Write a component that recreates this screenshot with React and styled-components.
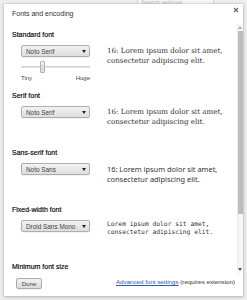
import React from "react";
import styled, { createGlobalStyle } from "styled-components";

const Global = createGlobalStyle`
  html, body { margin: 0; padding: 0; }
  body {
    width: 247px;
    height: 300px;
    overflow: hidden;
    background: #efefef;
    font-family: "Liberation Sans", Arial, sans-serif;
  }
`;

const Page = styled.div`
  position: relative;
  width: 247px;
  height: 300px;
  overflow: hidden;
  background: #efefef;
`;

const PageTop = styled.div`
  display: flex;
  padding-left: 137px;
`;

const SearchBox = styled.div`
  width: 77px;
  height: 11px;
  margin-top: -4px;
  box-sizing: border-box;
  border: 1px solid #d2d2d2;
  background: #f6f6f6;
  padding: 2px 3px 0;
  font-size: 6px;
  line-height: 7px;
  color: #c0c0c0;
`;

const Dialog = styled.div`
  position: absolute;
  top: 4px;
  left: 4px;
  right: 4px;
  bottom: 4px;
  background: #fff;
  display: flex;
  flex-direction: column;
  box-shadow: 0 0 0 1px rgba(0, 0, 0, 0.05), 0 1px 4px rgba(0, 0, 0, 0.22);
`;

const Header = styled.div`
  height: 20px;
  flex: none;
  box-sizing: border-box;
  display: flex;
  justify-content: space-between;
  align-items: flex-start;
  padding: 3px 4px 0 8px;
`;

const Title = styled.h1`
  margin: 3px 0 0;
  font-size: 7px;
  line-height: 8px;
  font-weight: normal;
  color: #333;
`;

const CloseButton = styled.button`
  width: 6px;
  height: 6px;
  padding: 0;
  border: 0;
  background: none;
  display: flex;
`;

const Body = styled.div`
  flex: 1;
  min-height: 0;
  display: flex;
`;

const Content = styled.div`
  flex: 1;
  min-width: 0;
  overflow: hidden;
  padding: 7px 0 0 8px;
`;

const Scrollbar = styled.div`
  width: 6px;
  flex: none;
  display: flex;
  flex-direction: column;
  background: #f7f7f7;
  box-shadow: inset 1px 0 0 #ececec;
`;

const ScrollArrow = styled.div`
  height: 7px;
  flex: none;
  display: flex;
  align-items: center;
  justify-content: center;
`;

const ScrollThumb = styled.div`
  height: 183px;
  flex: none;
  margin: 0 0 0 1px;
  background: #bdbdbd;
`;

const ScrollTrack = styled.div`
  flex: 1;
`;

const Section = styled.section`
  padding-bottom: ${(p) => p.$after}px;
`;

const Label = styled.h3`
  margin: 0 0 6px;
  font-size: 7px;
  line-height: 8px;
  font-weight: normal;
  color: #000;
  -webkit-text-stroke: 0.15px #000;
`;

const Row = styled.div`
  display: flex;
  align-items: flex-start;
  gap: 17px;
  padding-left: 9px;
  min-height: 21px;
`;

const Controls = styled.div`
  width: 69px;
  flex: none;
  display: flex;
  flex-direction: column;
`;

const Select = styled.div`
  height: 12px;
  box-sizing: border-box;
  border: 1px solid #aeaeae;
  border-radius: 2px;
  background: linear-gradient(#f2f2f2, #dedede);
  box-shadow: 0 1px 0 rgba(0, 0, 0, 0.05);
  display: flex;
  align-items: center;
  justify-content: space-between;
  padding: 0 3px 0 4px;
  font-size: 6.4px;
  color: #444;
`;

const Caret = styled.span`
  width: 0;
  height: 0;
  border-left: 2.5px solid transparent;
  border-right: 2.5px solid transparent;
  border-top: 3px solid #222;
`;

const Slider = styled.div`
  position: relative;
  height: 12px;
  margin-top: 4px;
  display: flex;
  align-items: center;
`;

const SliderTrack = styled.div`
  flex: 1;
  height: 2px;
  box-sizing: border-box;
  border-top: 1px solid #cfcfcf;
  background: #e6e6e6;
`;

const SliderThumb = styled.div`
  position: absolute;
  left: 19px;
  top: 0;
  width: 5px;
  height: 12px;
  box-sizing: border-box;
  border: 1px solid #b0b0b0;
  border-radius: 1px;
  background: linear-gradient(#f4f4f4, #e0e0e0);
  display: flex;
  flex-direction: column;
  justify-content: center;
  gap: 1px;
  padding: 0 1px;
`;

const Grip = styled.span`
  height: 1px;
  background: #b5b5b5;
`;

const SliderLabels = styled.div`
  display: flex;
  justify-content: space-between;
  margin-top: 1px;
  font-size: 6px;
  line-height: 8px;
  color: #444;
`;

const fonts = {
  serif: { family: '"DejaVu Serif", serif', size: 7.1, lh: 10, top: 1 },
  sans: { family: '"Noto Sans", sans-serif', size: 7.4, lh: 10, top: 1 },
  mono: { family: '"DejaVu Sans Mono", monospace', size: 6.3, lh: 8, top: 0 },
};

const Sample = styled.p`
  margin: ${(p) => fonts[p.$kind].top}px 0 0;
  font-family: ${(p) => fonts[p.$kind].family};
  font-size: ${(p) => fonts[p.$kind].size}px;
  line-height: ${(p) => fonts[p.$kind].lh}px;
  color: #333;
  white-space: nowrap;
`;

const Footer = styled.footer`
  height: 23px;
  flex: none;
  box-sizing: border-box;
  display: flex;
  align-items: flex-start;
  justify-content: space-between;
  padding: 5px 8px 0 12px;
`;

const Button = styled.button`
  width: 26px;
  height: 11px;
  padding: 0;
  box-sizing: border-box;
  border: 1px solid #acacac;
  border-radius: 2px;
  background: linear-gradient(#f2f2f2, #dcdcdc);
  box-shadow: 0 1px 0 rgba(0, 0, 0, 0.06);
  font-family: "Liberation Sans", Arial, sans-serif;
  font-size: 6.1px;
  color: #444;
`;

const Note = styled.div`
  font-size: 6.2px;
  line-height: 8px;
  color: #333;
`;

const Link = styled.a`
  color: #2a5db0;
  text-decoration: underline;
`;

const LOREM1 = "Lorem ipsum dolor sit amet,";
const LOREM2 = "consectetur adipiscing elit.";

function FontSelect({ name }) {
  return (
    <Select>
      <span>{name}</span>
      <Caret />
    </Select>
  );
}

function FontSection({ label, font, kind, prefix = "16: ", after = 22, children }) {
  return (
    <Section $after={after}>
      <Label>{label}</Label>
      <Row>
        <Controls>
          <FontSelect name={font} />
          {children}
        </Controls>
        <Sample $kind={kind}>
          {prefix}
          {LOREM1}
          <br />
          {LOREM2}
        </Sample>
      </Row>
    </Section>
  );
}

export default function App() {
  return (
    <>
      <Global />
      <Page>
        <PageTop>
          <SearchBox>Search settings</SearchBox>
        </PageTop>
        <Dialog>
          <Header>
            <Title>Fonts and encoding</Title>
            <CloseButton aria-label="Close">
              <svg width="6" height="6" viewBox="0 0 6 6">
                <path d="M1 1 L5 5 M5 1 L1 5" stroke="#666" strokeWidth="1.1" />
              </svg>
            </CloseButton>
          </Header>
          <Body>
            <Content>
              <FontSection label="Standard font" font="Noto Serif" kind="serif" after={10}>
                <Slider>
                  <SliderTrack />
                  <SliderThumb>
                    <Grip />
                    <Grip />
                    <Grip />
                  </SliderThumb>
                </Slider>
                <SliderLabels>
                  <span>Tiny</span>
                  <span>Huge</span>
                </SliderLabels>
              </FontSection>
              <FontSection label="Serif font" font="Noto Serif" kind="serif" />
              <FontSection label="Sans-serif font" font="Noto Sans" kind="sans" />
              <FontSection label="Fixed-width font" font="Droid Sans Mono" kind="mono" prefix="" />
              <Section $after={22}>
                <Label>Minimum font size</Label>
              </Section>
            </Content>
            <Scrollbar>
              <ScrollArrow>
                <svg width="4" height="3" viewBox="0 0 4 3">
                  <path d="M0 3 L2 0 L4 3 Z" fill="#a8a8a8" />
                </svg>
              </ScrollArrow>
              <ScrollThumb />
              <ScrollTrack />
              <ScrollArrow>
                <svg width="4" height="3" viewBox="0 0 4 3">
                  <path d="M0 0 L4 0 L2 3 Z" fill="#555" />
                </svg>
              </ScrollArrow>
            </Scrollbar>
          </Body>
          <Footer>
            <Button>Done</Button>
            <Note>
              <Link href="#">Advanced font settings</Link> (requires extension)
            </Note>
          </Footer>
        </Dialog>
      </Page>
    </>
  );
}
